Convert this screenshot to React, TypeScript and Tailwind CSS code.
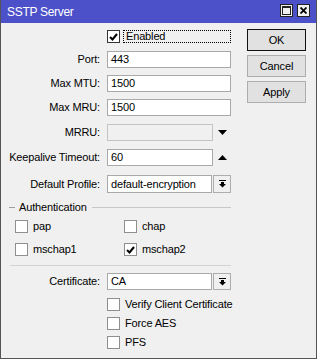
import React from 'react';

const Check = () => (
  <svg width="9" height="8" viewBox="0 0 9 8" className="block">
    <path d="M1 4 L3.5 6.5 L8 1" stroke="#000" strokeWidth="2" fill="none" />
  </svg>
);

const Box = ({ checked, dark }: { checked?: boolean; dark?: boolean }) => (
  <div
    className={`w-[13px] h-[13px] shrink-0 bg-white border flex items-center justify-center ${dark ? 'border-[#333]' : 'border-[#8f8f8f]'}`}
  >
    {checked && <Check />}
  </div>
);

const DropIcon = () => (
  <svg width="7" height="8" viewBox="0 0 7 8" className="block">
    <rect x="0" y="0" width="7" height="1" fill="#000" />
    <rect x="2" y="2" width="3" height="2" fill="#000" />
    <path d="M0 4 L7 4 L3.5 7.5 Z" fill="#000" />
  </svg>
);

const Row = ({ label, children, className = '' }: { label: string; children: React.ReactNode; className?: string }) => (
  <div className={`flex items-center h-[17px] ${className}`}>
    <div className="w-[99px] text-right whitespace-nowrap">{label}</div>
    <div className="ml-[7px] flex items-center h-full">{children}</div>
  </div>
);

const Field = ({ value, w, disabled }: { value?: string; w: string; disabled?: boolean }) => (
  <div
    className={`${w} h-full border pl-[3px] flex items-center ${disabled ? 'bg-[#f0f0f0] border-[#c3c3c3]' : 'bg-white border-[#a9a9a9]'}`}
  >
    {value}
  </div>
);

const Combo = ({ value }: { value: string }) => (
  <>
    <Field value={value} w="w-[105px]" />
    <div className="ml-[1px] w-[18px] h-full border border-[#adadad] bg-[#f0f0f0] flex items-center justify-center">
      <DropIcon />
    </div>
  </>
);

const Btn = ({ label, def, className = '' }: { label: string; def?: boolean; className?: string }) => (
  <div
    className={`w-[59px] h-[22px] bg-[#e1e1e1] border flex items-center justify-center ${def ? 'border-[#111]' : 'border-[#adadad]'} ${className}`}
  >
    {label}
  </div>
);

const Opt = ({ label, checked, className = '' }: { label: string; checked?: boolean; className?: string }) => (
  <div className={`flex items-center h-[13px] ${className}`}>
    <Box checked={checked} />
    <span className="ml-[5px] whitespace-nowrap">{label}</span>
  </div>
);

export default function App() {
  return (
    <div className="w-[317px] h-[361px] bg-white">
      <div className="w-[317px] h-[359px] bg-[#f0f0f0] border-x border-b border-[#555] flex flex-col font-['Liberation_Sans',Arial,sans-serif] text-[11px] tracking-[-0.15px] text-black leading-none">
        {/* title bar */}
        <div className="h-[23px] bg-[#4d51c9] flex items-center pl-[6px] pr-[6px] shrink-0">
          <span className="text-white text-[12px] tracking-[-0.3px]">SSTP Server</span>
          <div className="ml-auto flex gap-[4px] -mt-[2px]">
            <div className="w-[13px] h-[13px] bg-[#f0f0f0] border border-[#222] flex items-center justify-center">
              <div className="w-[9px] h-[9px] border border-[#222] border-t-2" />
            </div>
            <div className="w-[13px] h-[13px] bg-[#f0f0f0] border border-[#222] flex items-center justify-center">
              <svg width="7" height="7" viewBox="0 0 7 7" className="block">
                <path d="M0.5 0.5 L6.5 6.5 M6.5 0.5 L0.5 6.5" stroke="#000" strokeWidth="1.8" />
              </svg>
            </div>
          </div>
        </div>

        <div className="flex">
          {/* form */}
          <div className="w-[246px] flex flex-col">
            <div className="flex items-center h-[13px] mt-[7px] pl-[106px]">
              <Box checked dark />
              <div className="ml-[3px] w-[108px] h-[13px] border border-dotted border-black pl-[2px] flex items-center">
                Enabled
              </div>
            </div>

            <Row label="Port:" className="mt-[8px]">
              <Field value="443" w="w-[124px]" />
            </Row>
            <Row label="Max MTU:" className="mt-[7px]">
              <Field value="1500" w="w-[124px]" />
            </Row>
            <Row label="Max MRU:" className="mt-[7px]">
              <Field value="1500" w="w-[124px]" />
            </Row>
            <Row label="MRRU:" className="mt-[8px]">
              <Field w="w-[106px]" disabled />
              <svg width="9" height="5" viewBox="0 0 9 5" className="ml-[5px] block">
                <path d="M0 0 L9 0 L4.5 5 Z" fill="#000" />
              </svg>
            </Row>
            <Row label="Keepalive Timeout:" className="mt-[8px]">
              <Field value="60" w="w-[106px]" />
              <svg width="9" height="5" viewBox="0 0 9 5" className="ml-[5px] block">
                <path d="M0 5 L9 5 L4.5 0 Z" fill="#000" />
              </svg>
            </Row>
            <div className="mt-[9px] h-[18px]">
              <Row label="Default Profile:" className="h-[18px]">
                <Combo value="default-encryption" />
              </Row>
            </div>

            {/* authentication group */}
            <div className="mt-[7px] h-[14px] w-[230px] flex items-center pl-[8px]">
              <div className="w-[6px] h-px bg-[#a0a0a0]" />
              <span className="ml-[4px]">Authentication</span>
              <div className="ml-[5px] flex-1 h-px bg-[#c8c8c8]" />
            </div>
            <div className="mt-[6px] flex pl-[14px]">
              <Opt label="pap" className="w-[109px]" />
              <Opt label="chap" />
            </div>
            <div className="mt-[10px] flex pl-[14px]">
              <Opt label="mschap1" className="w-[109px]" />
              <Opt label="mschap2" checked />
            </div>

            <div className="mt-[9px] ml-[9px] w-[221px] h-px bg-[#d4d4d4]" />

            <Row label="Certificate:" className="mt-[7px]">
              <Combo value="CA" />
            </Row>
            <div className="pl-[106px] flex flex-col">
              <Opt label="Verify Client Certificate" className="mt-[8px]" />
              <Opt label="Force AES" className="mt-[6px]" />
              <Opt label="PFS" className="mt-[6px]" />
            </div>
          </div>

          {/* buttons */}
          <div className="flex flex-col">
            <Btn label="OK" def className="mt-[6px]" />
            <Btn label="Cancel" className="mt-[4px]" />
            <Btn label="Apply" className="mt-[4px]" />
          </div>
        </div>
      </div>
    </div>
  );
}
